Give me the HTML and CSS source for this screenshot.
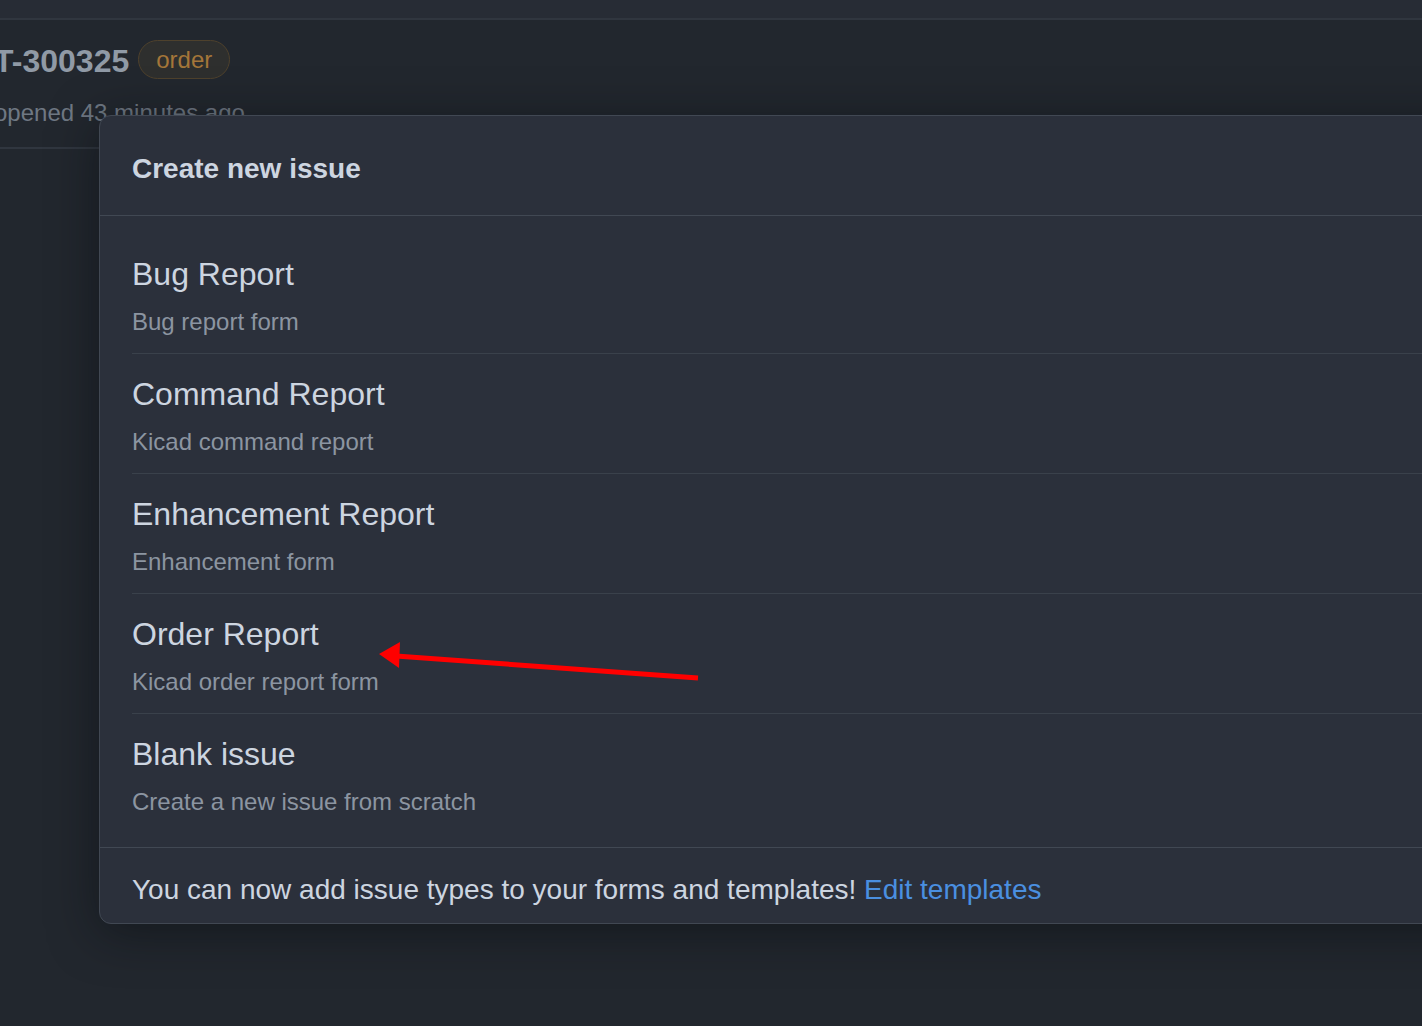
FILE: index.html
```html
<!DOCTYPE html>
<html>
<head>
<meta charset="utf-8">
<link rel="stylesheet" href="styles.css">
</head>
<body>
<div class="page">
  <div class="topbar"></div>
  <div class="issue-header">
    <div class="title-row">
      <h1 class="issue-title">T-300325</h1>
      <span class="label">order</span>
    </div>
    <div class="meta">opened 43 minutes ago</div>
  </div>

  <div class="dialog">
    <div class="dialog-header">Create new issue</div>
    <ul class="choices">
      <li class="choice">
        <div class="choice-title">Bug Report</div>
        <div class="choice-desc">Bug report form</div>
      </li>
      <li class="choice">
        <div class="choice-title">Command Report</div>
        <div class="choice-desc">Kicad command report</div>
      </li>
      <li class="choice">
        <div class="choice-title">Enhancement Report</div>
        <div class="choice-desc">Enhancement form</div>
      </li>
      <li class="choice">
        <div class="choice-title">Order Report</div>
        <div class="choice-desc">Kicad order report form</div>
      </li>
      <li class="choice">
        <div class="choice-title">Blank issue</div>
        <div class="choice-desc">Create a new issue from scratch</div>
      </li>
    </ul>
    <div class="dialog-footer">You can now add issue types to your forms and templates! <a class="link" href="#">Edit templates</a></div>
  </div>

  <svg class="arrow" width="1422" height="1026" viewBox="0 0 1422 1026">
    <line x1="698" y1="678" x2="396" y2="656" stroke="#ff0000" stroke-width="5"/>
    <polygon points="379,654 400,642 399,668" fill="#ff0000"/>
  </svg>
</div>
</body>
</html>
```

FILE: styles.css
```css
html, body {
  margin: 0;
  padding: 0;
  background: #22272e;
  overflow: hidden;
}
body {
  font-family: "Liberation Sans", Arial, sans-serif;
  color: #adbac7;
}
.page {
  position: relative;
  width: 1422px;
  height: 1026px;
  overflow: hidden;
}
.topbar {
  height: 18px;
  background: #272c35;
  border-bottom: 2px solid #30363f;
}
.issue-header {
  margin-left: -6px;
  padding-top: 20px;
  height: 129px;
  box-sizing: border-box;
  border-bottom: 2px solid #30363f;
  width: 200px;
}
.title-row {
  display: flex;
  align-items: center;
  gap: 9px;
  height: 42px;
}
.issue-title {
  margin: 0;
  font-size: 32px;
  font-weight: bold;
  color: #909aa6;
  line-height: 42px;
  white-space: nowrap;
}
.label {
  display: inline-flex;
  align-items: center;
  height: 39px;
  padding: 0 17px;
  border: 1px solid #4e412c;
  border-radius: 20px;
  background: #2e2f2e;
  color: #a47639;
  font-size: 24px;
  box-sizing: border-box;
  margin-top: -3px;
}
.meta {
  margin-top: 13px;
  margin-left: 0;
  font-size: 24px;
  color: #6f7883;
  line-height: 36px;
  white-space: nowrap;
}
.dialog {
  position: absolute;
  left: 99px;
  top: 115px;
  width: 1400px;
  background: #2b303b;
  border: 1px solid #414853;
  border-radius: 12px;
  box-shadow: 0 8px 48px rgba(10, 12, 16, 0.55);
}
.dialog-header {
  padding: 32px 32px 25px;
  font-size: 28px;
  line-height: 42px;
  font-weight: bold;
  color: #cdd5e0;
  border-bottom: 1px solid #414853;
}
.choices {
  list-style: none;
  margin: 0;
  padding: 18px 32px 14px;
}
.choice {
  padding: 16px 0 13px;
  border-bottom: 1px solid #3a414b;
}
.choice:last-child {
  border-bottom: none;
}
.choice-title {
  font-size: 32px;
  line-height: 48px;
  color: #cdd5e0;
}
.choice-desc {
  margin-top: 6px;
  font-size: 24px;
  line-height: 36px;
  color: #8c95a1;
}
.dialog-footer {
  padding: 21px 32px 12px;
  border-top: 1px solid #414853;
  font-size: 28px;
  line-height: 42px;
  color: #cdd5e0;
  white-space: nowrap;
}
.link {
  color: #4a8fe0;
  text-decoration: none;
}
.arrow {
  position: absolute;
  left: 0;
  top: 0;
  pointer-events: none;
}
```
